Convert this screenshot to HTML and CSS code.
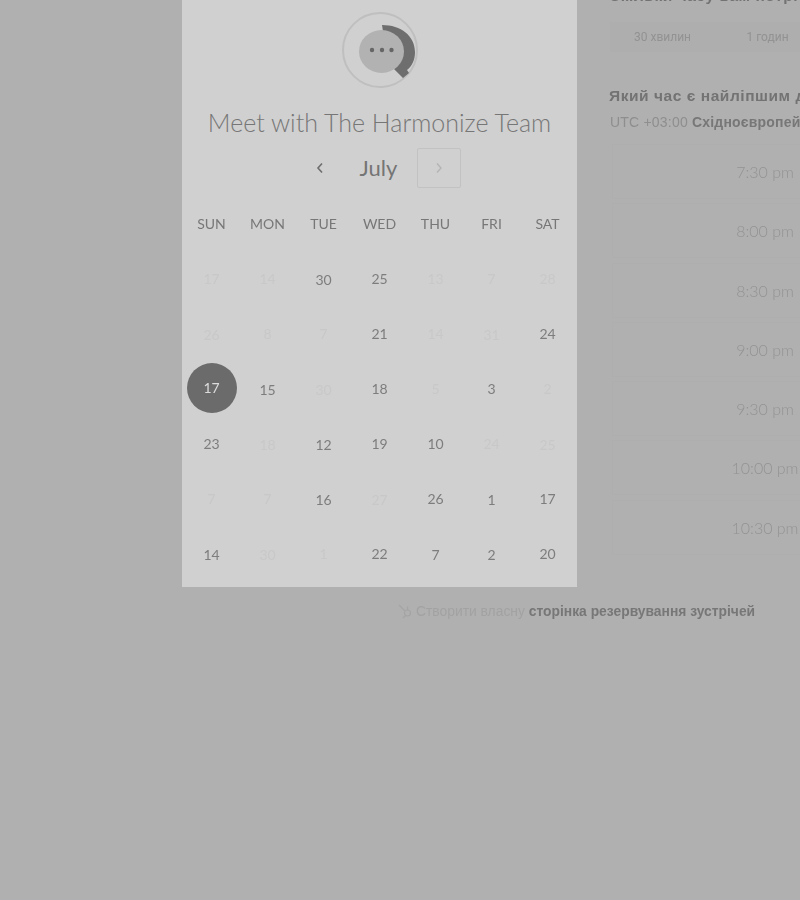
FILE: index.html
```html
<!DOCTYPE html>
<html lang="uk">
<head>
    <meta charset="UTF-8">
    <title>Meet with The Harmonize Team</title>
    <link rel="stylesheet" href="styles.css">
</head>
<body>
  <div class="page">
    <div class="columns">
      <section class="card">
        <div class="avatar">
          <svg width="72" height="72" viewBox="0 0 72 72">
            <path d="M37 11C56 11 70 22 70 38 70 46 67 52 62 56L64 59 58 64 49 55 40 30Z" fill="#6e6e6e"/>
            <ellipse cx="36.500" cy="37.500" rx="22.500" ry="21.500" fill="#b2b2b2"/>
            <circle cx="27" cy="36" r="2.200" fill="#666"/>
            <circle cx="37" cy="36" r="2.200" fill="#666"/>
            <circle cx="46.500" cy="36" r="2.200" fill="#666"/>
          </svg>
        </div>
        <h1 class="title">Meet with The Harmonize Team</h1>
        <div class="month-nav">
          <span class="nav-btn nav-prev">
            <svg width="8" height="12" viewBox="0 0 8 12"><path d="M6 1.500 2 6l4 4.500" fill="none" stroke="#6e6e6e" stroke-width="1.600"/></svg>
          </span>
          <span class="month">July</span>
          <span class="nav-btn nav-next">
            <svg width="8" height="12" viewBox="0 0 8 12"><path d="M2 1.500 6 6l-4 4.500" fill="none" stroke="#b4b4b4" stroke-width="1.400"/></svg>
          </span>
        </div>
        <div class="week-head">
          <span>SUN</span><span>MON</span><span>TUE</span><span>WED</span><span>THU</span><span>FRI</span><span>SAT</span>
        </div>
        <div class="days">
          <span class="off">17</span><span class="off">14</span><span class="low">30</span><span>25</span><span class="off">13</span><span class="off">7</span><span class="off">28</span>
          <span class="off low">26</span><span class="off">8</span><span class="off">7</span><span>21</span><span class="off">14</span><span class="off low">31</span><span>24</span>
          <span class="sel"><b>17</b></span><span class="low">15</span><span class="off low">30</span><span>18</span><span class="off">5</span><span>3</span><span class="off">2</span>
          <span>23</span><span class="off low">18</span><span class="low">12</span><span>19</span><span>10</span><span class="off">24</span><span class="off low">25</span>
          <span class="off">7</span><span class="off">7</span><span class="low">16</span><span class="off low">27</span><span>26</span><span class="low">1</span><span>17</span>
          <span class="low">14</span><span class="off low">30</span><span class="off">1</span><span>22</span><span class="low">7</span><span class="low">2</span><span>20</span>
        </div>
      </section>

      <section class="side">
        <h2 class="side-title">Скільки часу вам потрібно?</h2>
        <div class="durations">
          <span>30 хвилин</span>
          <span>1 годин</span>
        </div>
        <h2 class="side-title">Який час є найліпшим для вас?</h2>
        <p class="zone">UTC +03:00 <b>Східноєвропейський час</b></p>
        <ul class="slots">
          <li>7:30 pm</li>
          <li>8:00 pm</li>
          <li>8:30 pm</li>
          <li>9:00 pm</li>
          <li>9:30 pm</li>
          <li>10:00 pm</li>
          <li>10:30 pm</li>
        </ul>
      </section>
    </div>

    <div class="footer">
      <svg width="16" height="16" viewBox="0 0 16 16" fill="none" stroke="#a4a4a4" stroke-width="1.200">
        <circle cx="10.500" cy="10" r="3"/>
        <path d="M8 8 2 2M10.500 7V3.500M8.500 12.500 6 15"/>
      </svg>
      <span>Створити власну <b>сторінка резервування зустрічей</b></span>
    </div>
  </div>
</body>
</html>
```

FILE: styles.css
```css
html, body {
    margin: 0;
    height: 100%;
    overflow: hidden;
    background: #b0b0b0;
}

.page {
    width: 800px;
    filter: blur(0.45px);
    font-family: "Liberation Sans", sans-serif;
}

.columns {
    display: flex;
    height: 587px;
    padding-left: 182px;
    overflow: hidden;
}

/* calendar card */
.card {
    flex: none;
    width: 395px;
    height: 587px;
    box-sizing: border-box;
    background: #d0d0d0;
    display: flex;
    flex-direction: column;
    align-items: center;
    font-family: Lato, sans-serif;
    color: #6e6e6e;
}

.avatar {
    width: 72px;
    height: 72px;
    margin-top: 12px;
    border: 2px solid #bfbfbf;
    border-radius: 50%;
    box-sizing: content-box;
}

.avatar svg {
    display: block;
    margin-left: 1px;
    overflow: visible;
}

.title {
    margin: 18px 0 0;
    font-size: 25px;
    line-height: 32px;
    font-weight: 300;
    color: #767676;
    white-space: nowrap;
}

.month-nav {
    display: flex;
    align-items: center;
    margin-top: 10px;
    height: 40px;
}

.nav-btn {
    width: 42px;
    height: 38px;
    display: flex;
    align-items: center;
    justify-content: center;
}

.nav-next {
    border: 1px solid #c2c2c2;
    border-radius: 2px;
}

.month {
    width: 76px;
    margin-bottom: 2px;
    text-align: center;
    font-size: 22px;
    color: #757575;
}

.week-head,
.days {
    display: grid;
    grid-template-columns: repeat(7, 56px);
    text-align: center;
}

.week-head {
    margin-top: 24px;
    font-size: 14px;
    line-height: 24px;
    color: #777;
}

.days {
    margin-top: 15px;
    grid-auto-rows: 55px;
    font-size: 14px;
    color: #7d7d7d;
}

.days span {
    display: flex;
    align-items: center;
    justify-content: center;
}

.days .low {
    padding-top: 2px;
    box-sizing: border-box;
}

.days .off {
    color: #c8c8c8;
}

.days .sel b {
    width: 50px;
    height: 50px;
    margin-top: -2px;
    flex: none;
    border-radius: 50%;
    background: #6b6b6b;
    color: #dcdcdc;
    font-weight: 400;
    display: flex;
    align-items: center;
    justify-content: center;
}

/* right column, runs off the window */
.side {
    flex: none;
    width: 330px;
    margin: -14px 0 0 32px;
    color: #737373;
}

.side-title {
    margin: 0;
    font-size: 15.500px;
    line-height: 20px;
    letter-spacing: 0.55px;
    white-space: nowrap;
}

.durations {
    display: flex;
    margin: 16px 0 34px 1px;
    height: 30px;
    background: #aeaeae;
    font-family: Roboto, sans-serif;
    font-size: 12px;
    color: #929292;
}

.durations span {
    width: 105px;
    line-height: 30px;
    text-align: center;
}

.zone {
    margin: 7px 0 0 1px;
    font-size: 14px;
    line-height: 18px;
    letter-spacing: 0.2px;
    white-space: nowrap;
    color: #8e8e8e;
}

.zone b {
    color: #777;
}

.slots {
    list-style: none;
    margin: 13px 0 0 3px;
    padding: 0;
    font-family: Lato, sans-serif;
    font-size: 16px;
    font-weight: 300;
    color: #939393;
}

.slots li {
    width: 306px;
    height: 55px;
    margin-bottom: 4.300px;
    box-sizing: border-box;
    border: 1px solid #aeaeae;
    line-height: 53px;
    text-align: center;
}

.footer {
    display: flex;
    align-items: center;
    gap: 3px;
    margin: 15px 0 0 397px;
    height: 18px;
    font-size: 13.850px;
    color: #a2a2a2;
    white-space: nowrap;
}

.footer b {
    color: #777;
}
```
